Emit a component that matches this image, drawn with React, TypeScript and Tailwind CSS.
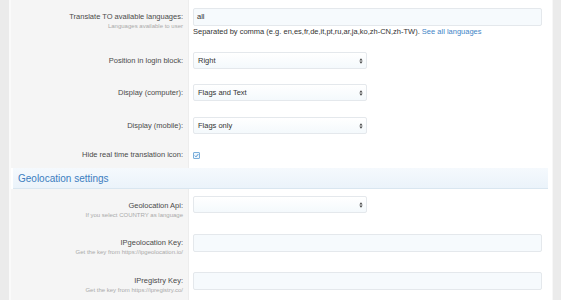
import React from "react";

const font = { fontFamily: '"Liberation Sans", Arial, sans-serif' };

function SelectBox({ value }: { value: string }) {
  return (
    <div className="relative w-[174px] h-[17px] border border-[#e4e8ec] rounded-[2px] bg-gradient-to-b from-[#ffffff] to-[#f4f9fc] flex items-center pl-[4px] text-[7.5px] text-[#333]">
      <span>{value}</span>
      <svg className="absolute right-[3px] top-[5px]" width="4" height="6" viewBox="0 0 4 6">
        <path d="M2 0.3 L3.6 2.5 L0.4 2.5 Z" fill="#444" />
        <path d="M2 5.7 L3.6 3.5 L0.4 3.5 Z" fill="#444" />
      </svg>
    </div>
  );
}

function TextBox({ value }: { value?: string }) {
  return (
    <div className="w-[349px] h-[18px] border border-[#e4e8ec] rounded-[2px] bg-[#f6fafd] flex items-center pl-[3px] text-[7.5px] text-[#333]">
      {value}
    </div>
  );
}

function Row({
  h,
  pt,
  label,
  desc,
  children,
  labelPt,
}: {
  h: number;
  pt: number;
  labelPt: number;
  label: string;
  desc?: string;
  children: React.ReactNode;
}) {
  return (
    <div className="flex shrink-0" style={{ height: h }}>
      <div
        className="w-[178px] shrink-0 bg-[#f5f5f5] border-r border-[#ededed] text-right pr-[5px]"
        style={{ paddingTop: labelPt }}
      >
        <div className="text-[7.5px] leading-[10px] text-[#4a4a4a]">{label}</div>
        {desc && <div className="text-[6px] leading-[8px] text-[#aaa]">{desc}</div>}
      </div>
      <div className="flex-1 pl-[4px]" style={{ paddingTop: pt }}>
        {children}
      </div>
    </div>
  );
}

export default function App() {
  return (
    <div className="w-[561px] h-[300px] bg-[#ebebeb] flex overflow-hidden" style={font}>
      <div className="w-[9px] shrink-0" />
      <div className="w-[2px] shrink-0 bg-[#fafafa]" />
      <div className="w-[541px] shrink-0 bg-white flex flex-col">
        <Row h={44} pt={8} labelPt={12} label="Translate TO available languages:" desc="Languages available to user">
          <TextBox value="all" />
          <div className="text-[7.5px] leading-[10px] mt-[1px] text-[#333]">
            Separated by comma (e.g. en,es,fr,de,it,pt,ru,ar,ja,ko,zh-CN,zh-TW).{" "}
            <span className="text-[#3f86c7]">See all languages</span>
          </div>
        </Row>
        <Row h={32} pt={8} labelPt={12} label="Position in login block:">
          <SelectBox value="Right" />
        </Row>
        <Row h={33} pt={8} labelPt={12} label="Display (computer):">
          <SelectBox value="Flags and Text" />
        </Row>
        <Row h={33} pt={8} labelPt={12} label="Display (mobile):">
          <SelectBox value="Flags only" />
        </Row>
        <Row h={26} pt={10} labelPt={8} label="Hide real time translation icon:">
          <div className="w-[7px] h-[7px] border border-[#7aaedb] bg-[#eef6fc] rounded-[1px] flex items-center justify-center">
            <svg width="5" height="5" viewBox="0 0 5 5">
              <path d="M0.8 2.6 L2 3.8 L4.3 1.1" stroke="#3f86c7" strokeWidth="0.9" fill="none" />
            </svg>
          </div>
        </Row>
        <div className="h-[21px] shrink-0 ml-[2px] mr-[4px] bg-gradient-to-b from-[#f5f9fd] to-[#ebf3fa] border-b border-[#d9e6f0] flex items-center pl-[5px] text-[10px] text-[#3b7dbf]">
          Geolocation settings
        </div>
        <Row h={37} pt={7} labelPt={12} label="Geolocation Api:" desc="If you select COUNTRY as language">
          <SelectBox value="" />
        </Row>
        <Row h={38} pt={8} labelPt={12} label="IPgeolocation Key:" desc="Get the key from https://ipgeolocation.io/">
          <TextBox />
        </Row>
        <Row h={40} pt={8} labelPt={12} label="IPregistry Key:" desc="Get the key from https://ipregistry.co/">
          <TextBox />
        </Row>
      </div>
      <div className="w-[1px] shrink-0 bg-[#f7f7f7]" />
      <div className="flex-1" />
    </div>
  );
}
